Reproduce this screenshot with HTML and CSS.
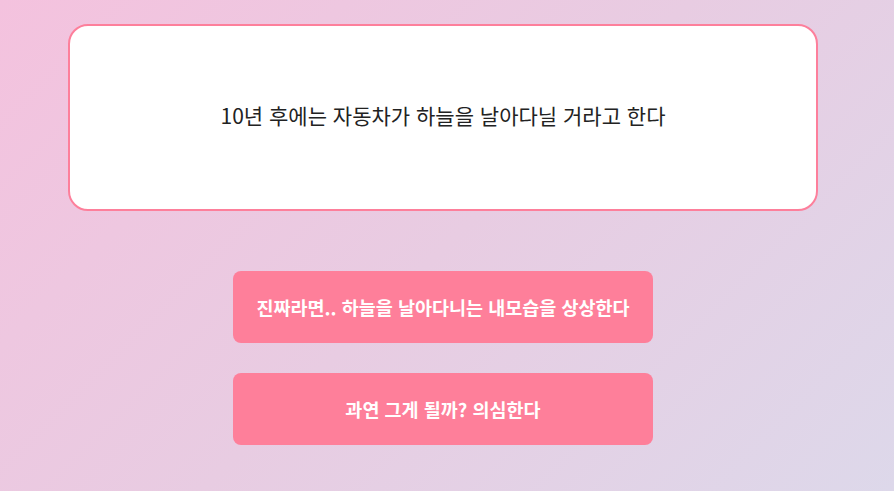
FILE: index.html
```html
<!DOCTYPE html>
<html lang="ko">
<head>
  <meta charset="UTF-8">
  <meta name="viewport" content="width=device-width, initial-scale=1.0">
  <title>질문</title>
  <link rel="stylesheet" href="styles.css">
</head>
<body>
  <div class="container">
    <div class="question">
      <p>10년 후에는 자동차가 하늘을 날아다닐 거라고 한다</p>
    </div>

    <div class="answers">
      <button class="answer">진짜라면.. 하늘을 날아다니는 내모습을 상상한다</button>
      <button class="answer">과연 그게 될까? 의심한다</button>
    </div>
  </div>
</body>
</html>
```

FILE: styles.css
```css
html, body {
  height: 100%;
}

body {
  margin: 0;
  background: linear-gradient(135deg, #f4c2de 0%, #e8cce2 50%, #ddd8ea 100%);
  font-family: "Noto Sans CJK KR", "Noto Sans", sans-serif;
}

.container {
  width: 750px;
  padding: 24px 0 0 68px;
  display: flex;
  flex-direction: column;
  align-items: center;
}

.question {
  box-sizing: border-box;
  width: 750px;
  height: 187px;
  background-color: #fff;
  border: 2px solid #fd7f9b;
  border-radius: 20px;
  display: flex;
  justify-content: center;
  align-items: center;
}

.question p {
  margin: 0 0 5px;
  font-size: 21px;
  color: #222;
}

.answers {
  margin-top: 60px;
  display: flex;
  flex-direction: column;
  gap: 30px;
}

.answer {
  width: 420px;
  height: 72px;
  padding-bottom: 2px;
  background-color: #fe7f9a;
  border: none;
  border-radius: 8px;
  color: #fff;
  font-family: inherit;
  font-size: 18.5px;
  font-weight: 700;
}
```
